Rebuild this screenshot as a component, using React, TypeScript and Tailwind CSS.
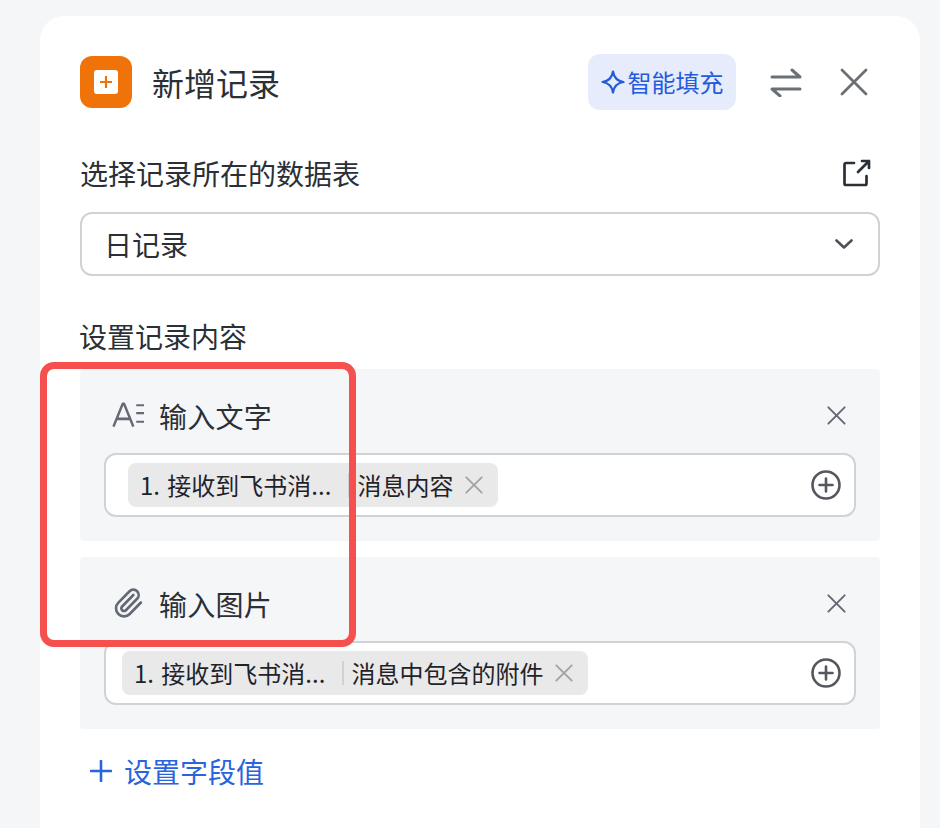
const font = '"Noto Sans CJK SC", "Noto Sans", sans-serif';

function CloseIcon({ className }: { className: string }) {
  return (
    <svg viewBox="0 0 28 28" fill="none" stroke="currentColor" strokeWidth="2.8" strokeLinecap="round" className={className}>
      <path d="M2 2l24 24M26 2L2 26" />
    </svg>
  );
}

function PlusCircle() {
  return (
    <svg viewBox="0 0 30 30" fill="none" stroke="#54585e" strokeWidth="2.6" strokeLinecap="round" className="w-[30px] h-[30px] shrink-0">
      <circle cx="15" cy="15" r="13.5" />
      <path d="M15 8.5v13M8.5 15h13" />
    </svg>
  );
}

function TextIcon() {
  return (
    <svg viewBox="0 0 33 28" fill="none" stroke="#646a73" strokeWidth="2.6" className="w-[33px] h-7">
      <path d="M1.5 26L11 2.5h1.5L22 26M5 18h14" strokeLinejoin="round" />
      <path d="M25 4h8M25 12h8M25 21h8" strokeWidth="2.2" />
    </svg>
  );
}

function ClipIcon() {
  return (
    <svg viewBox="0 0 24 24" fill="none" stroke="#646a73" strokeWidth="2" strokeLinecap="round" strokeLinejoin="round" className="w-8 h-8">
      <path d="m16 6-8.414 8.586a2 2 0 0 0 2.829 2.829l8.414-8.586a4 4 0 1 0-5.657-5.657l-8.379 8.551a6 6 0 1 0 8.485 8.485l8.379-8.551" />
    </svg>
  );
}

type FieldProps = {
  icon: React.ReactNode;
  title: string;
  value: string;
  chipClass: string;
};

function Field({ icon, title, value, chipClass }: FieldProps) {
  return (
    <section className="h-[172px] bg-[#f4f6f8] rounded-[4px] px-6 pt-[26px]">
      <div className="flex items-center h-10 pr-[10px]">
        <div className="w-8 flex justify-center ml-[8px]">{icon}</div>
        <span className="ml-[15px] mt-[2px] text-[28px] leading-10 tracking-[0.25px] text-[#2b2f36]">{title}</span>
        <CloseIcon className="ml-auto w-[19px] h-[19px] text-[#646a73]" />
      </div>
      <div className="mt-[18px] h-16 bg-white border-2 border-[#d0d3d6] rounded-xl flex items-center pr-[13px]">
        <div className={`h-11 bg-[#e9e9e9] rounded-lg flex items-center text-2xl text-[#1f2329] ${chipClass}`}>
          <span className="pl-3 whitespace-nowrap [word-spacing:2px]">1. 接收到飞书消...</span>
          <span className="w-0.5 h-6 ml-[17px] bg-[#cfd1d3]" />
          <span className="ml-[7px] whitespace-nowrap">{value}</span>
          <CloseIcon className="ml-3 w-[18px] h-[18px] text-[#a0a3a6]" />
        </div>
        <div className="ml-auto">
          <PlusCircle />
        </div>
      </div>
    </section>
  );
}

export default function App() {
  return (
    <div className="relative w-[940px] h-[828px] overflow-hidden bg-[#f4f6f8] pt-4 pl-10" style={{ fontFamily: font }}>
      <main className="w-[880px] h-[900px] bg-white rounded-[24px] px-10 pt-[38px]">
        <header className="flex items-center h-14">
          <div className="w-[52px] h-[52px] rounded-xl bg-[#f0730a] flex items-center justify-center">
            <div className="w-6 h-6 rounded-[3px] bg-white flex items-center justify-center">
              <svg viewBox="0 0 12 12" stroke="#f0730a" strokeWidth="2.2" className="w-3 h-3">
                <path d="M6 0v12M0 6h12" />
              </svg>
            </div>
          </div>
          <h1 className="ml-5 text-[32px] leading-10 text-[#2b2f36]">新增记录</h1>
          <button className="ml-auto h-14 w-[148px] rounded-xl bg-[#e6ecfb] flex items-center justify-center text-2xl text-[#245bdb]">
            <svg viewBox="0 0 24 24" fill="none" stroke="currentColor" strokeWidth="2.2" strokeLinejoin="round" className="w-6 h-6 mr-[3px]">
              <path d="M12 1.5c1 6.5 4 9.500 10.500 10.500-6.500 1-9.500 4-10.500 10.500-1-6.500-4-9.500-10.500-10.500 6.500-1 9.500-4 10.500-10.500z" />
            </svg>
            智能填充
          </button>
          <svg viewBox="0 0 32 30" fill="none" stroke="#6b7075" strokeWidth="3" strokeLinecap="round" className="ml-[34px] w-8 h-[30px]">
            <path d="M2 10h28l-8-7M30 22H2l8 7" strokeLinejoin="round" />
          </svg>
          <CloseIcon className="ml-[38px] mr-[12px] w-7 h-7 text-[#6b7075]" />
        </header>

        <div className="mt-[43px] flex items-center h-10">
          <span className="text-[28px] leading-10 text-[#2b2f36]">选择记录所在的数据表</span>
          <svg viewBox="0 0 28 28" fill="none" stroke="#2b2f36" strokeWidth="2.7" strokeLinecap="round" strokeLinejoin="round" className="ml-auto mr-[9px] w-7 h-7">
            <path d="M11 4H3a1.500 1.500 0 0 0-1.500 1.500v19A1.500 1.500 0 0 0 3 26h19a1.500 1.500 0 0 0 1.500-1.500V17" />
            <path d="M19 2h7v7M26 2L15 13" />
          </svg>
        </div>
        <div className="mt-[19px] h-16 border-2 border-[#d0d3d6] rounded-xl flex items-center pl-[22px] pr-6">
          <span className="text-[28px] text-[#2b2f36]">日记录</span>
          <svg viewBox="0 0 18 10" fill="none" stroke="#4e5359" strokeWidth="2.6" strokeLinecap="round" strokeLinejoin="round" className="ml-auto w-[18px] h-[10px] mr-[1px]">
            <path d="M1.500 1.500L9 8.500l7.500-7" />
          </svg>
        </div>

        <div className="mt-10 -ml-px text-[28px] leading-10 text-[#2b2f36]">设置记录内容</div>
        <div className="mt-[13px] flex flex-col gap-4">
          <Field icon={<TextIcon />} title="输入文字" value="消息内容" chipClass="ml-[22px] w-[370px]" />
          <Field icon={<ClipIcon />} title="输入图片" value="消息中包含的附件" chipClass="ml-4 w-[466px]" />
        </div>

        <div className="mt-[22px] ml-[10px] h-10 flex items-center text-[28px] text-[#2a64dc]">
          <svg viewBox="0 0 22 22" stroke="currentColor" strokeWidth="2.6" strokeLinecap="round" className="w-[22px] h-[22px]">
            <path d="M11 1v20M1 11h20" />
          </svg>
          <span className="ml-3">设置字段值</span>
        </div>
      </main>

      {/* annotation frame over the first field */}
      <div className="absolute left-10 top-[362px] w-[316px] h-[285px] border-[7px] border-[#f5504e] rounded-[14px]" />
    </div>
  );
}
